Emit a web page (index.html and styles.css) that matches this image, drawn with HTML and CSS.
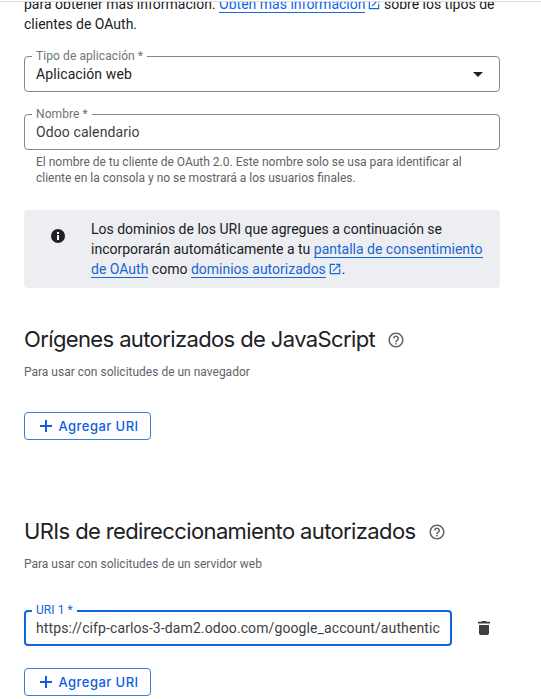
FILE: index.html
```
<!DOCTYPE html>
<html lang="es">
<head>
<meta charset="utf-8">
<title>Cliente de OAuth</title>
<link rel="stylesheet" href="styles.css">
</head>
<body>
<svg class="defs" width="0" height="0" aria-hidden="true">
  <symbol id="open" viewBox="0 0 24 24"><path d="M19 19H5V5h7V3H3v18h18v-9h-2v7zM14 3v2h3.6l-9.8 9.8 1.4 1.4L19 6.4V10h2V3h-7z"/></symbol>
  <symbol id="help" viewBox="0 0 24 24"><path d="M11 18h2v-2h-2v2zm1-16C6.48 2 2 6.48 2 12s4.48 10 10 10 10-4.48 10-10S17.52 2 12 2zm0 18c-4.41 0-8-3.59-8-8s3.59-8 8-8 8 3.59 8 8-3.59 8-8 8zm0-14c-2.21 0-4 1.79-4 4h2c0-1.1.9-2 2-2s2 .9 2 2c0 2-3 1.75-3 5h2c0-2.25 3-2.5 3-5 0-2.21-1.790-4-4-4z"/></symbol>
  <symbol id="plus" viewBox="0 0 12 12"><path d="M5 0h2v5h5v2H7v5H5V7H0V5h5z"/></symbol>
</svg>
<main class="panel">
  <p class="intro"><span class="line">para obtener más información. <a class="link">Obtén más información</a><svg class="open"><use href="#open"/></svg> sobre los tipos de</span><span class="line">clientes de OAuth.</span></p>
  <div class="field">
    <label class="label">Tipo de aplicación *</label>
    <span class="value dark">Aplicación web</span>
    <svg class="arrow" viewBox="0 0 10 5"><path d="M0 0h10L5 5z"/></svg>
  </div>
  <div class="field">
    <label class="label">Nombre *</label>
    <span class="value">Odoo calendario</span>
  </div>
  <p class="hint"><span class="line">El nombre de tu cliente de OAuth 2.0. Este nombre solo se usa para identificar al</span><span class="line">cliente en la consola y no se mostrará a los usuarios finales.</span></p>
  <div class="notice">
    <svg class="info" viewBox="0 0 14 14"><circle cx="7" cy="7" r="7"/><path fill="#fff" d="M6 3h2v2H6zM6 6h2v5H6z"/></svg>
    <p><span class="line">Los dominios de los URI que agregues a continuación se</span><span class="line">incorporarán automáticamente a tu <a class="link">pantalla de consentimiento</a></span><span class="line"><a class="link">de OAuth</a> como <a class="link">dominios autorizados</a><svg class="open"><use href="#open"/></svg>.</span></p>
  </div>
  <section class="group">
    <h2 class="title"><span>Orígenes autorizados de JavaScript</span><svg class="help"><use href="#help"/></svg></h2>
    <p class="sub">Para usar con solicitudes de un navegador</p>
    <button class="add"><svg class="plus"><use href="#plus"/></svg><span>Agregar URI</span></button>
  </section>
  <section class="group second">
    <h2 class="title"><span>URIs de redireccionamiento autorizados</span><svg class="help"><use href="#help"/></svg></h2>
    <p class="sub">Para usar con solicitudes de un servidor web</p>
    <div class="row">
      <div class="field focused">
        <label class="label">URI 1 *</label>
        <span class="value">https://cifp-carlos-3-dam2.odoo.com/google_account/authentic</span>
      </div>
      <svg class="trash" viewBox="0 0 12 14"><path d="M4 0h4l.7.8H12v1.700H0V.8h3.300zM1 4h10v8.300q0 1.700-1.700 1.700H2.700Q1 14 1 12.300z"/></svg>
    </div>
    <button class="add"><svg class="plus"><use href="#plus"/></svg><span>Agregar URI</span></button>
  </section>
</main>
</body>
</html>
```
FILE: styles.css
```
* { box-sizing: border-box; }
html, body { margin: 0; height: 100%; overflow: hidden; }
body {
  padding-top: 1px;
  background: #fff;
  color: #202124;
  font: 14px/20px Roboto, sans-serif;
}
.defs { display: none; }
p, h2 { margin: 0; }
svg { fill: currentColor; flex: none; }
.panel {
  height: 698px;
  overflow: hidden;
  border-top: 1px solid #dadce0;
  padding: 0 41px 0 24px;
}
.line { display: block; white-space: nowrap; }
.intro { margin-top: -8px; }
.link { color: #1967d2; border-bottom: 1px solid #1967d2; }
.intro .link, .intro .open { color: #0b66e4; }
.open { width: 14px; height: 14px; margin-left: 2px; vertical-align: -2px; color: #1967d2; }
.intro .open { margin-right: -1px; }
.field {
  position: relative;
  display: flex;
  align-items: center;
  justify-content: space-between;
  height: 36px;
  margin-top: 22px;
  padding: 0 16px 0 11px;
  border: 1px solid #80868b;
  border-radius: 4px;
}
.label {
  position: absolute;
  left: 7px;
  top: -9px;
  padding: 0 4px;
  background: #fff;
  color: #6f7479;
  font-size: 12px;
  line-height: 16px;
  letter-spacing: .08px;
  white-space: nowrap;
}
.value { color: #3c4043; white-space: nowrap; letter-spacing: .1px; }
.dark { color: #202124; }
.arrow { width: 10px; height: 5px; color: #202124; }
.hint {
  margin: 4px 0 0 12px;
  color: #5f6368;
  font-size: 12px;
  line-height: 16px;
}
.notice {
  display: flex;
  height: 78px;
  margin-top: 24px;
  padding: 9px 0 0 27px;
  border-radius: 4px;
  background: #edeef2;
}
.info { width: 14px; height: 14px; margin: 10px 26px 0 0; }
.group { margin-top: 37px; }
.title {
  display: flex;
  align-items: center;
  height: 28px;
  font: 400 22px/28px Inter, sans-serif;
  letter-spacing: -.62px;
  white-space: nowrap;
}
.help { width: 18px; height: 18px; margin: 2px 0 0 12px; color: #5f6368; }
.sub { margin-top: 11px; color: #5f6368; font-size: 12px; line-height: 16px; }
.add {
  display: flex;
  align-items: center;
  width: 127px;
  height: 28px;
  margin-top: 32px;
  padding: 0 0 0 15px;
  border: 1px solid #3f7bd9;
  border-radius: 4px;
  background: #fff;
  color: #0b5fdc;
  font: 500 13px/20px Inter, sans-serif;
  letter-spacing: .45px;
  white-space: nowrap;
}
.plus { width: 12px; height: 12px; margin-right: 6.5px; }
.second { margin-top: 77px; }
.row { display: flex; align-items: center; gap: 26px; margin-top: 38px; }
.focused { width: 428px; margin: 0; padding: 0 0 0 10px; border: 2px solid #1065e0; }
.focused .label { left: 6px; top: -10px; color: #1065e0; }
.trash { width: 12px; height: 14px; color: #3c4043; }
.row + .add { margin-top: 22px; }
```
